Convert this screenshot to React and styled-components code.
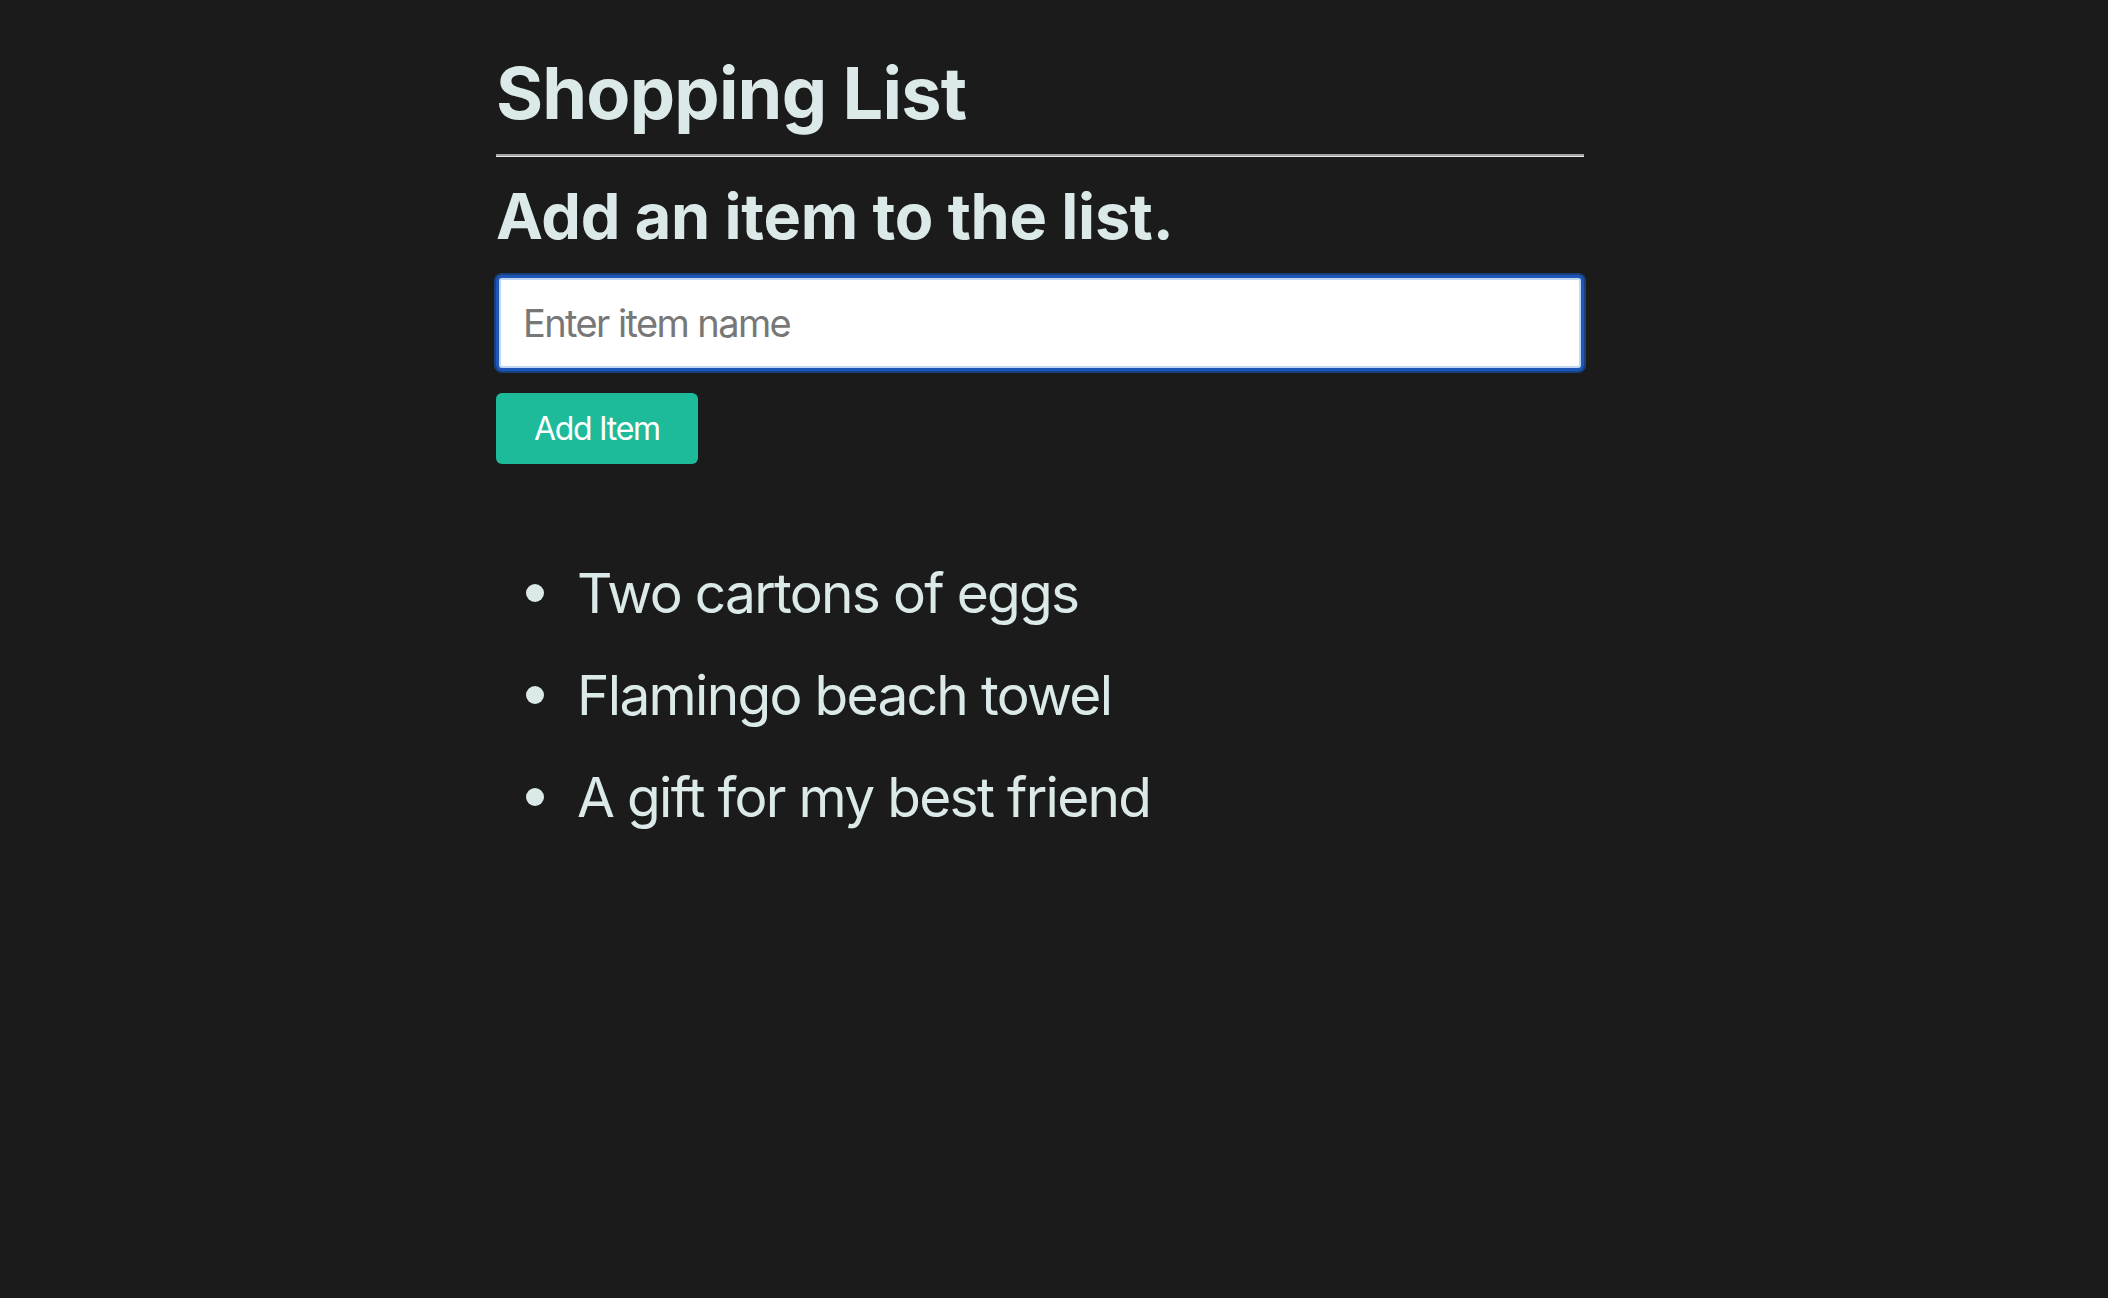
import React from 'react';
import styled, { createGlobalStyle } from 'styled-components';

const GlobalStyle = createGlobalStyle`
  html, body {
    margin: 0;
    padding: 0;
    background-color: #1b1b1b;
  }

  body {
    min-height: 1298px;
    font-family: Inter, "Noto Sans", sans-serif;
    color: #dbeae9;
  }
`;

const Page = styled.main`
  width: 1088px;
  margin-left: 496px;
  padding-top: 50px;
`;

const Title = styled.h1`
  margin: 0;
  font-size: 72px;
  line-height: 86px;
  font-weight: 700;
  letter-spacing: -0.8px;
`;

const Divider = styled.hr`
  margin: 18px 0 0;
  border: none;
  border-top: 2px solid #a3a3a3;
  border-bottom: 1px solid #ececec;
`;

const Subtitle = styled.h2`
  margin: 21px 0 0;
  font-size: 63px;
  line-height: 76px;
  font-weight: 700;
  letter-spacing: -0.3px;
`;

const Form = styled.form`
  display: flex;
  flex-direction: column;
  align-items: flex-start;
  gap: 22px;
  margin-top: 21px;
`;

const TextInput = styled.input`
  box-sizing: border-box;
  width: 100%;
  height: 96px;
  padding: 0 24px;
  border: 3px solid #1d56b6;
  border-radius: 6px;
  outline: none;
  box-shadow: 0 0 0 2px #17407f, inset 0 0 0 2px #c2d6f6;
  background: #fff;
  font-family: Inter, "Noto Sans", sans-serif;
  font-size: 38px;
  letter-spacing: -1.6px;
  color: #222;

  &::placeholder {
    color: #777;
  }
`;

const AddButton = styled.button`
  height: 71px;
  padding: 0 38px;
  border: none;
  border-radius: 6px;
  background-color: #1dbb9a;
  color: #fff;
  font-family: Inter, "Noto Sans", sans-serif;
  font-size: 32px;
  font-weight: 400;
  letter-spacing: -1.3px;
  cursor: pointer;
`;

const ItemList = styled.ul`
  display: flex;
  flex-direction: column;
  gap: 36px;
  margin: 96px 0 0;
  padding-left: 30px;
  list-style: none;
`;

const Item = styled.li`
  display: flex;
  align-items: center;
  gap: 33px;
  font-size: 55px;
  line-height: 66px;
  letter-spacing: -1.7px;
`;

const Bullet = styled.span`
  flex: none;
  width: 18px;
  height: 18px;
  border-radius: 50%;
  background-color: #dbeae9;
`;

const items = ['Two cartons of eggs', 'Flamingo beach towel', 'A gift for my best friend'];

export default function App() {
  return (
    <>
      <GlobalStyle />
      <Page>
        <Title>Shopping List</Title>
        <Divider />
        <Subtitle>Add an item to the list.</Subtitle>
        <Form onSubmit={(e) => e.preventDefault()}>
          <TextInput type="text" placeholder="Enter item name" autoFocus />
          <AddButton type="submit">Add Item</AddButton>
        </Form>
        <ItemList>
          {items.map((item) => (
            <Item key={item}>
              <Bullet />
              {item}
            </Item>
          ))}
        </ItemList>
      </Page>
    </>
  );
}
